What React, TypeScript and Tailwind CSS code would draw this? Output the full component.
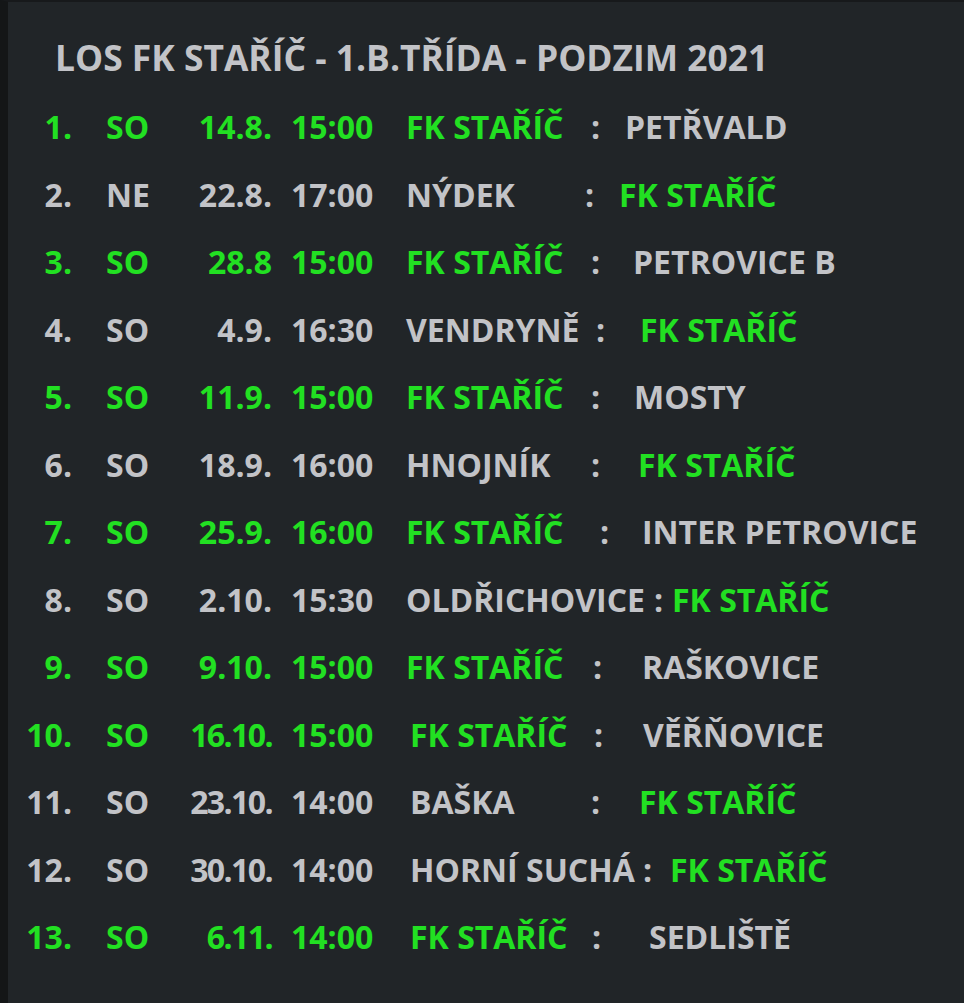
import React from 'react';

type Match = {
  no: string;
  day: string;
  date: string;
  time: string;
  home: string;
  away: string;
  homeGame: boolean;
  teamW: string;
  colonW: string;
  tight?: boolean;
};

const FONT = "font-['Open_Sans','Noto_Sans',sans-serif]";
const GREEN = 'text-[#22e022]';
const GRAY = 'text-[#c2c3c7]';

const matches: Match[] = [
  { no: '1.', day: 'SO', date: '14.8.', time: '15:00', home: 'FK STAŘÍČ', away: 'PETŘVALD', homeGame: true, teamW: 'w-[185px]', colonW: 'w-[34px]' },
  { no: '2.', day: 'NE', date: '22.8.', time: '17:00', home: 'NÝDEK', away: 'FK STAŘÍČ', homeGame: false, teamW: 'w-[179px]', colonW: 'w-[34px]' },
  { no: '3.', day: 'SO', date: '28.8', time: '15:00', home: 'FK STAŘÍČ', away: 'PETROVICE B', homeGame: true, teamW: 'w-[185px]', colonW: 'w-[42px]' },
  { no: '4.', day: 'SO', date: '4.9.', time: '16:30', home: 'VENDRYNĚ', away: 'FK STAŘÍČ', homeGame: false, teamW: 'w-[190px]', colonW: 'w-[44px]' },
  { no: '5.', day: 'SO', date: '11.9.', time: '15:00', home: 'FK STAŘÍČ', away: 'MOSTY', homeGame: true, teamW: 'w-[185px]', colonW: 'w-[43px]' },
  { no: '6.', day: 'SO', date: '18.9.', time: '16:00', home: 'HNOJNÍK', away: 'FK STAŘÍČ', homeGame: false, teamW: 'w-[185px]', colonW: 'w-[47px]' },
  { no: '7.', day: 'SO', date: '25.9.', time: '16:00', home: 'FK STAŘÍČ', away: 'INTER PETROVICE', homeGame: true, teamW: 'w-[194px]', colonW: 'w-[42px]' },
  { no: '8.', day: 'SO', date: '2.10.', time: '15:30', home: 'OLDŘICHOVICE', away: 'FK STAŘÍČ', homeGame: false, teamW: 'w-[248px]', colonW: 'w-[18px]' },
  { no: '9.', day: 'SO', date: '9.10.', time: '15:00', home: 'FK STAŘÍČ', away: 'RAŠKOVICE', homeGame: true, teamW: 'w-[187px]', colonW: 'w-[49px]' },
  { no: '10.', day: 'SO', date: '16.10.', time: '15:00', home: 'FK STAŘÍČ', away: 'VĚŘŇOVICE', homeGame: true, teamW: 'w-[184px]', colonW: 'w-[49px]', tight: true },
  { no: '11.', day: 'SO', date: '23.10.', time: '14:00', home: 'BAŠKA', away: 'FK STAŘÍČ', homeGame: false, teamW: 'w-[181px]', colonW: 'w-[48px]', tight: true },
  { no: '12.', day: 'SO', date: '30.10.', time: '14:00', home: 'HORNÍ SUCHÁ', away: 'FK STAŘÍČ', homeGame: false, teamW: 'w-[233px]', colonW: 'w-[27px]', tight: true },
  { no: '13.', day: 'SO', date: '6.11.', time: '14:00', home: 'FK STAŘÍČ', away: 'SEDLIŠTĚ', homeGame: true, teamW: 'w-[182px]', colonW: 'w-[57px]', tight: true },
];

function Row({ m }: { m: Match }) {
  const rowColor = m.homeGame ? GREEN : GRAY;
  return (
    <div className="flex items-center h-[67.5px] leading-[67.5px] text-[32px] font-bold whitespace-nowrap">
      <span className={`w-[64px] text-right ${rowColor}`}>{m.no}</span>
      <span className={`ml-[34px] w-[60px] ${rowColor}`}>{m.day}</span>
      <span className={`w-[106px] text-right ${rowColor} ${m.tight ? 'tracking-[-1.6px]' : ''}`}>{m.date}</span>
      <span className={`ml-[19px] w-[115px] ${rowColor}`}>{m.time}</span>
      <span className={`${m.teamW} ${m.tight ? 'ml-[4px]' : ''} ${m.homeGame ? GREEN : GRAY}`}>{m.home}</span>
      <span className={`${m.colonW} ${GRAY}`}>:</span>
      <span className={m.homeGame ? GRAY : GREEN}>{m.away}</span>
    </div>
  );
}

export default function App() {
  return (
    <div className={`min-h-[1003px] w-full bg-[#212528] border-l-[8px] border-t-2 border-l-[#141617] border-t-[#17191b] ${FONT}`}>
      <div className="pt-[30px]">
        <h1 className={`pl-[47px] h-[50px] leading-[50px] text-[35.4px] font-bold ${GRAY}`}>
          LOS FK STAŘÍČ - 1.B.TŘÍDA - PODZIM 2021
        </h1>
        <div className="mt-[11px]">
          {matches.map((m) => (
            <Row key={m.no} m={m} />
          ))}
        </div>
      </div>
    </div>
  );
}
